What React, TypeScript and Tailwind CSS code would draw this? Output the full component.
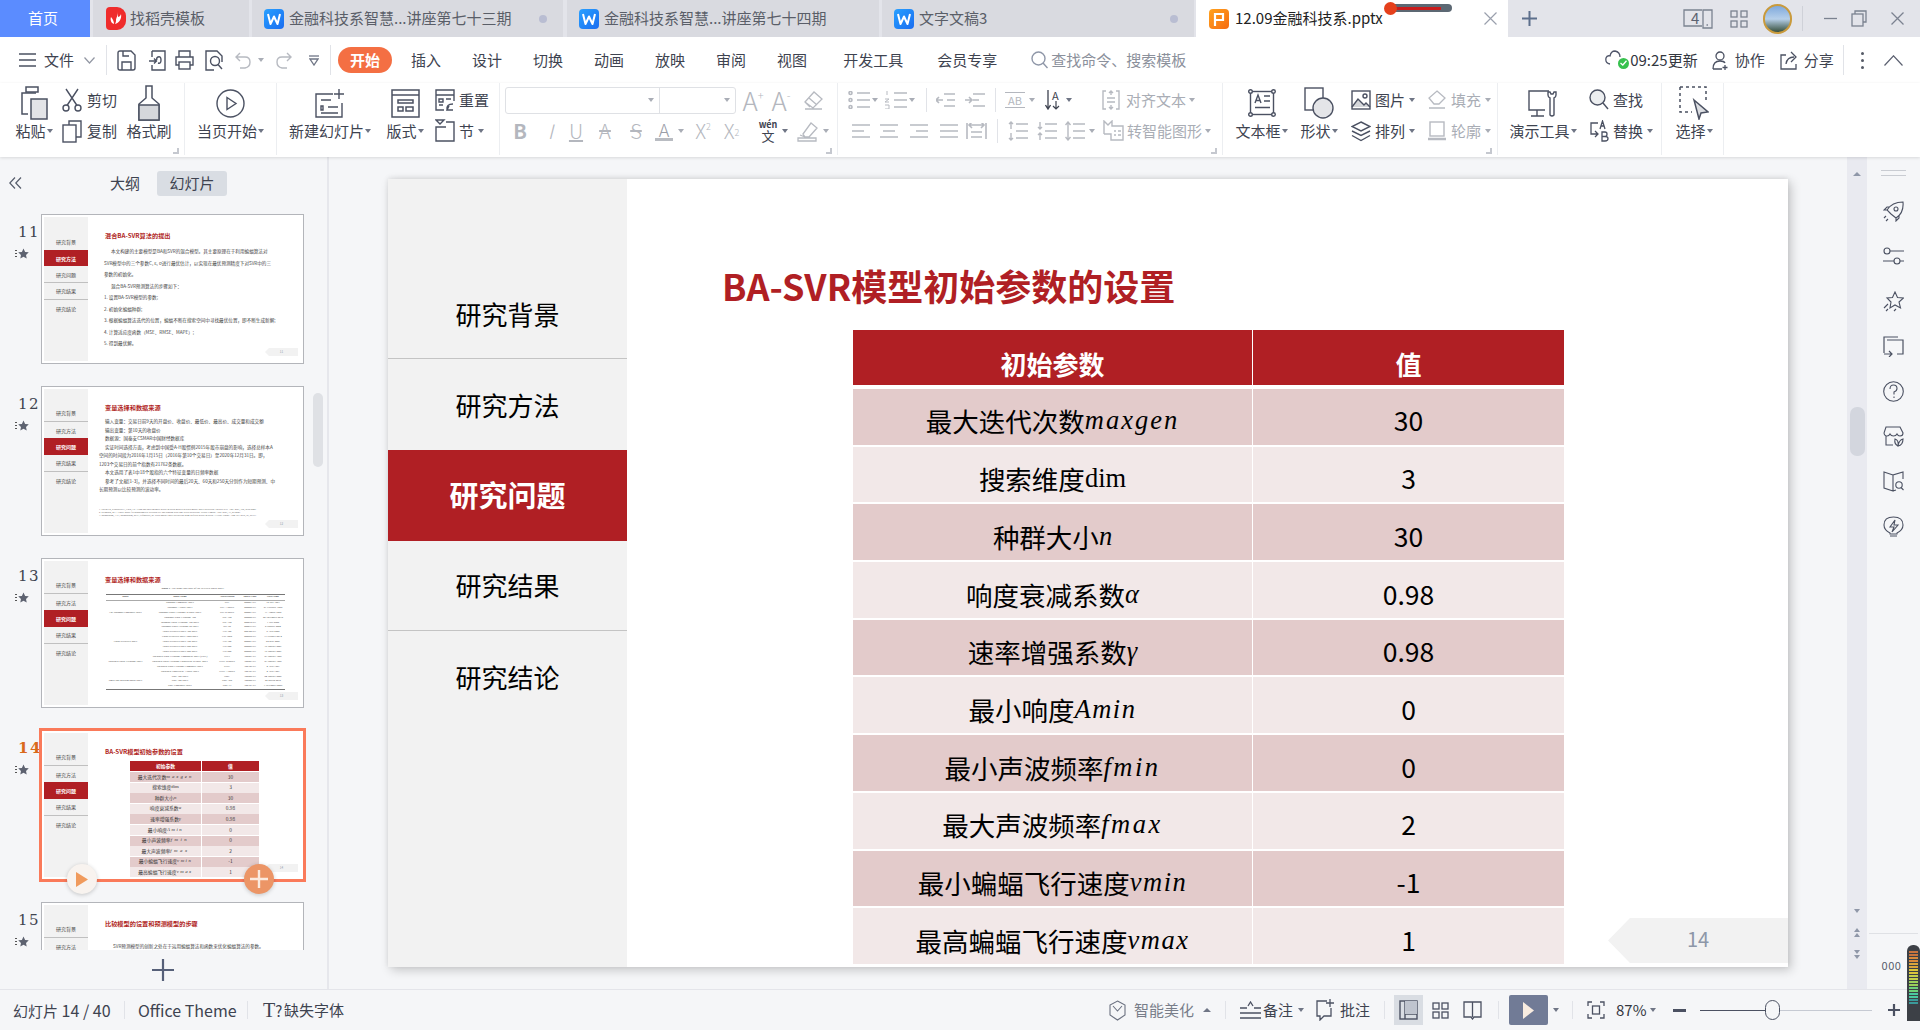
import React from "react";

const C = "#4b5162";
const D = "#b7bac1";

type SP = { w: number; h: number; children: React.ReactNode; c?: string; className?: string; sw?: number };
function S({ w, h, children, c = C, className = "", sw = 1.5 }: SP) {
  return (
    <svg width={w} height={h} viewBox={`0 0 ${w} ${h}`} fill="none" stroke={c} strokeWidth={sw} className={`shrink-0 ${className}`}>
      {children}
    </svg>
  );
}
function Caret({ className = "", gray = false }: { className?: string; gray?: boolean }) {
  return <span className={`inline-block shrink-0 w-0 h-0 border-x-[3.5px] border-t-[4px] border-x-transparent ${gray ? "border-t-[#a9adb6]" : "border-t-[#6f7585]"} ${className}`} />;
}
function Sep({ className = "" }: { className?: string }) {
  return <span className={`block shrink-0 w-px bg-[#e1e3e8] ${className}`} />;
}
function Corner() {
  return <span className="absolute right-[5px] bottom-[1px] w-[6px] h-[6px] border-r-2 border-b-2 border-[#c5c8cf]" />;
}

function WLogo() {
  return (
    <span className="shrink-0 w-[20px] h-[20px] rounded-[4px] bg-gradient-to-br from-[#2aa0ff] to-[#1c6cf0] flex items-center justify-center">
      <svg width="14" height="12" viewBox="0 0 14 12" fill="none" stroke="#fff" strokeWidth="2" strokeLinejoin="round"><path d="M1 1 L3.5 11 L7 3.5 L10.5 11 L13 1" /></svg>
    </span>
  );
}
function Dot() {
  return <span className="block w-[8px] h-[8px] rounded-full bg-[#b9bdd2]" />;
}

function TabBar() {
  return (
    <div className="relative flex h-[37px] bg-[#e3e4ea] text-[15px] text-[#5a5e68]">
      <div className="w-[90px] bg-[#5b8cff] text-white flex items-center pl-[28px]">首页</div>
      <div className="w-[156px] ml-[3px] bg-[#d9dae0] flex items-center pl-[13px]">
        <span className="w-[20px] h-[23px] rounded-l-[4px] rounded-r-[9px] bg-[#ef2c2c] flex items-center justify-center shrink-0">
          <svg width="12" height="15" viewBox="0 0 12 15" fill="#fff"><path d="M7 0 C9 4 6 6 6 9 C6 10 6 11 5 13 C9 12 12 8 11 3 C10 6 8 6 8 6 C8 4 8 2 7 0Z M1 6 C0 9 1 12 4 13 C4 11 3 8 1 6Z" /></svg>
        </span>
        <span className="ml-[4px]">找稻壳模板</span>
      </div>
      <div className="w-[311px] ml-[3px] bg-[#d9dae0] flex items-center pl-[12px]">
        <WLogo />
        <span className="ml-[5px] w-[250px] whitespace-nowrap">金融科技系智慧...讲座第七十三期</span>
        <Dot />
      </div>
      <div className="w-[312px] ml-[4px] bg-[#d9dae0] flex items-center pl-[12px]">
        <WLogo />
        <span className="ml-[5px] whitespace-nowrap">金融科技系智慧...讲座第七十四期</span>
      </div>
      <div className="w-[312px] ml-[3px] bg-[#d9dae0] flex items-center pl-[12px]">
        <WLogo />
        <span className="ml-[5px] w-[251px]">文字文稿3</span>
        <Dot />
      </div>
      <div className="w-[312px] ml-[2px] bg-white flex items-center pl-[13px] text-[#222]">
        <span className="shrink-0 w-[20px] h-[20px] rounded-[4px] bg-gradient-to-br from-[#ffa21f] to-[#f56a10] flex items-center justify-center">
          <svg width="12" height="14" viewBox="0 0 12 14" fill="none" stroke="#fff" strokeWidth="2.2"><path d="M2 14 V2 H10 V8 H2" /></svg>
        </span>
        <span className="ml-[6px] w-[249px] whitespace-nowrap">12.09金融科技系.pptx</span>
        <S w={13} h={13} c="#9aa0ad" sw={1.2}><path d="M0.5 0.5 L12.5 12.5 M12.5 0.5 L0.5 12.5" /></S>
      </div>
      <S w={15} h={15} c="#5d6f8c" sw={2} className="ml-[14px] self-center"><path d="M7.5 0 V15 M0 7.5 H15" /></S>
      <S w={30} h={20} c="#7b8290" sw={1.3} className="ml-[146px] self-center">
        <path d="M19 1 H1 V17 H19 M20 1 H29 V19 H20Z" />
        <path d="M23.5 16 H25" />
      </S>
      <span className="w-0 -ml-[22px] self-center text-[15px] text-[#5b6270]">4</span>
      <S w={18} h={18} c="#7b8290" sw={1.3} className="ml-[39px] self-center">
        <rect x="1" y="1" width="6" height="6" /><rect x="11" y="1" width="6" height="6" /><rect x="1" y="11" width="6" height="6" /><rect x="11" y="11" width="6" height="6" />
      </S>
      <span className="ml-[15px] self-center w-[29px] h-[30px] rounded-full border-2 border-[#c99a3c] bg-gradient-to-b from-[#7fa9dc] via-[#b7d0ea] to-[#39513f]" />
      <span className="ml-[10px] self-center w-px h-[25px] bg-[#cfd1d8]" />
      <S w={13} h={13} c="#7b8290" sw={1.3} className="ml-[21px] self-center"><path d="M0 6.5 H13" /></S>
      <S w={16} h={17} c="#7b8290" sw={1.3} className="ml-[14px] self-center"><path d="M4 4 V1 H15 V12 H12" /><rect x="1" y="4" width="11" height="12" /></S>
      <S w={13} h={13} c="#7b8290" sw={1.3} className="ml-[24px] self-center"><path d="M0.5 0.5 L12.5 12.5 M12.5 0.5 L0.5 12.5" /></S>
      <div className="absolute left-[1384px] top-[1px] w-[68px] h-[14px] flex items-center">
        <span className="w-[13px] h-[13px] rounded-full bg-[#e5401c] shrink-0 z-10" />
        <span className="-ml-[4px] w-[59px] h-[8px] rounded-r-full bg-[#5c6873] flex items-center">
          <span className="block ml-[2px] w-[46px] h-[3px] bg-[#c91d1d]" />
        </span>
      </div>
    </div>
  );
}

function MenuItem({ t, ml = "ml-[31px]" }: { t: string; ml?: string }) {
  return <span className={`${ml} whitespace-nowrap`}>{t}</span>;
}

function MenuRow() {
  return (
    <div className="flex items-center h-[46px] bg-white text-[15px] text-[#3e4350] whitespace-nowrap">
      <S w={17} h={14} sw={1.3} className="ml-[19px]"><path d="M0 1 H17 M0 7 H17 M0 13 H17" /></S>
      <span className="ml-[8px]">文件</span>
      <S w={11} h={7} c="#9297a3" sw={1.2} className="ml-[10px]"><path d="M0.5 0.5 L5.5 6 L10.5 0.5" /></S>
      <Sep className="ml-[11px] h-[30px]" />
      <S w={19} h={21} sw={1.4} className="ml-[10px]"><path d="M1 3 Q1 1 3 1 H14 L18 5 V18 Q18 20 16 20 H3 Q1 20 1 18Z" /><path d="M5 20 V12 H14 V20 M6 1 V6 H12" /></S>
      <S w={17} h={21} sw={1.4} className="ml-[13px]"><path d="M3 1 H16 V20 H3 V15 M3 7 V1" /><path d="M0 11 H7 M5 8.5 L7.5 11 L5 13.5 M9 13 Q12 14 12 10 Q12 6 9 7 Q7 8 8 10" /></S>
      <S w={19} h={20} sw={1.4} className="ml-[9px]"><path d="M4 7 V1 H15 V7 M4 15 H1 V7 H18 V15 H15" /><rect x="4" y="12" width="11" height="7" /></S>
      <S w={18} h={21} sw={1.4} className="ml-[11px]"><path d="M9 20 H1 V1 H12 L17 6 V12" /><circle cx="10" cy="11" r="4.5" /><path d="M13 14.5 L17 19" /></S>
      <S w={16} h={17} c={D} sw={1.4} className="ml-[12px]"><path d="M5 1 L1 5 L5 9 M1 5 H10 Q15 5 15 10 Q15 15 10 16 H5" /></S>
      <Caret gray className="ml-[7px]" />
      <S w={17} h={17} c={D} sw={1.4} className="ml-[11px]"><path d="M12 1 L16 5 L12 9 M16 5 H7 Q2 5 2 10 Q2 15 7 16 H12" /></S>
      <S w={10} h={11} c="#6f7585" sw={1.3} className="ml-[17px]"><path d="M0 1 H10" /><path d="M1 4 H9 L5 10Z" fill="none" /></S>
      <Sep className="ml-[11px] h-[30px]" />
      <span className="ml-[7px] w-[54px] h-[26px] rounded-full bg-[#f46f43] text-white font-bold flex items-center justify-center">开始</span>
      <MenuItem t="插入" ml="ml-[19px]" />
      <MenuItem t="设计" />
      <MenuItem t="切换" />
      <MenuItem t="动画" />
      <MenuItem t="放映" />
      <MenuItem t="审阅" />
      <MenuItem t="视图" />
      <MenuItem t="开发工具" ml="ml-[36px]" />
      <MenuItem t="会员专享" ml="ml-[34px]" />
      <S w={17} h={18} c="#8f97a8" sw={1.4} className="ml-[34px]"><circle cx="7.5" cy="7.5" r="6.5" /><path d="M12 12 L16.5 17" /></S>
      <span className="ml-[3px] text-[#8b909b]">查找命令、搜索模板</span>
      <S w={22} h={20} c="#50566a" sw={1.3} className="ml-[419px]"><path d="M5 14 Q0 13 1 8 Q2 5 5 6 Q6 1 10 1 Q15 2 15 7" /></S>
      <span className="-ml-[9px] mt-[6px] w-[11px] h-[11px] rounded-full bg-[#37c14e] shrink-0 flex items-center justify-center">
        <svg width="7" height="6" viewBox="0 0 7 6" fill="none" stroke="#fff" strokeWidth="1.3"><path d="M0.5 3 L2.8 5 L6.5 0.8" /></svg>
      </span>
      <span className="ml-[1px] text-[#33373f]">09:25更新</span>
      <S w={18} h={19} sw={1.3} className="ml-[14px]"><circle cx="8" cy="5" r="4" /><path d="M1 18 Q1 10 8 10 Q12 10 13 12 M1 18 H10 M13 14 V19 M10.5 16.5 H15.5" /></S>
      <span className="ml-[5px]">协作</span>
      <S w={17} h={19} sw={1.3} className="ml-[15px]"><path d="M6 4 H1 V18 H16 V13 M6 13 Q7 6 14 6 M11 1 L16 6 L11 11" /></S>
      <span className="ml-[7px]">分享</span>
      <Sep className="ml-[9px] h-[30px]" />
      <span className="ml-[17px] flex flex-col gap-[4px]"><i className="block w-[3px] h-[3px] rounded-full bg-[#555a66]" /><i className="block w-[3px] h-[3px] rounded-full bg-[#555a66]" /><i className="block w-[3px] h-[3px] rounded-full bg-[#555a66]" /></span>
      <S w={19} h={11} c="#5b6070" sw={1.2} className="ml-[20px]"><path d="M0.5 10.5 L9.5 0.8 L18.5 10.5" /></S>
    </div>
  );
}

function Big({ w, icon, label, caret = true, className = "" }: { w: string; icon: React.ReactNode; label: string; caret?: boolean; className?: string }) {
  return (
    <div className={`${w} ${className} shrink-0 flex flex-col items-center h-[72px]`}>
      <div className="h-[40px] flex items-center justify-center">{icon}</div>
      <div className="h-[16px] flex items-center whitespace-nowrap">
        <span>{label}</span>
        {caret && <Caret className="ml-[1px]" />}
      </div>
    </div>
  );
}
function Small({ icon, label, caret, gray = false, gap = "ml-[4px]" }: { icon: React.ReactNode; label: string; caret?: boolean; gray?: boolean; gap?: string }) {
  return (
    <>
      {icon}
      <span className={`${gap} whitespace-nowrap ${gray ? "text-[#a9adb5]" : ""}`}>{label}</span>
      {caret && <Caret gray={gray} className="ml-[4px]" />}
    </>
  );
}
function Two({ a, b, className = "" }: { a: React.ReactNode; b: React.ReactNode; className?: string }) {
  return (
    <div className={`flex flex-col shrink-0 ${className}`}>
      <div className="h-[34px] flex items-center">{a}</div>
      <div className="h-[28px] flex items-center">{b}</div>
    </div>
  );
}
function Group({ w, children, corner }: { w: string; children: React.ReactNode; corner?: boolean }) {
  return (
    <div className={`${w} relative flex shrink-0 h-[72px] border-r border-[#eceef1]`}>
      {children}
      {corner && <Corner />}
    </div>
  );
}
function Lines({ w = 18, d, c = D, className = "" }: { w?: number; d: string; c?: string; className?: string }) {
  return <S w={w} h={16} c={c} sw={1.6} className={className}><path d={d} /></S>;
}
function Box({ w, children, c = "text-[#b4b7be]", extra = "" }: { w: string; children: React.ReactNode; c?: string; extra?: string }) {
  return <span className={`${w} ${c} ${extra} shrink-0 flex items-center justify-center leading-none`}>{children}</span>;
}

function Ribbon() {
  return (
    <div className="flex h-[74px] pb-[2px] bg-white text-[15px] text-[#3e4350] shadow-[0_1px_3px_rgba(0,0,0,0.12)] relative z-10">
      <Group w="w-[185px] pl-[13px]" corner>
        <Big w="w-[42px]" label="粘贴" icon={
          <S w={28} h={34} sw={1.5}><path d="M16 7 H2 V28 H8" /><rect x="6" y="1" width="12" height="5" /><rect x="11" y="13" width="16" height="20" fill="#e3e4e7" /></S>
        } />
        <Two className="ml-[7px]"
          a={<Small gap="ml-[5px]" label="剪切" icon={<S w={20} h={24} sw={1.4}><circle cx="4" cy="20" r="3" /><circle cx="16" cy="20" r="3" /><path d="M5 17.5 L16 1 M15 17.5 L4 1" /></S>} />}
          b={<Small gap="ml-[5px]" label="复制" icon={<S w={20} h={23} sw={1.4}><path d="M7 5 V1 H19 V17 H14" /><rect x="1" y="5" width="13" height="17" /></S>} />}
        />
        <Big w="w-[44px] ml-[10px]" caret={false} label="格式刷" icon={
          <S w={24} h={37} sw={1.5}><path d="M9 1 H15 V13 L22 19 V35 H2 V19 L9 13Z" /><path d="M2 20 H22 V35 H2Z" fill="#d5d7db" /></S>
        } />
      </Group>
      <Group w="w-[92px]">
        <Big w="w-full" label="当页开始" icon={<S w={29} h={29} sw={1.4}><circle cx="14.5" cy="14.5" r="13.5" /><path d="M11 8.5 L20 14.5 L11 20.5Z" /></S>} />
      </Group>
      <Group w="w-[223px] pl-[11px]">
        <Big w="w-[84px]" label="新建幻灯片" icon={
          <S w={30} h={29} sw={1.4}><path d="M18 5 H1 V28 H27 V14" /><path d="M24 0 V10 M19 5 H29 M6 11 H16 M6 17 H8 V21 H6Z M13 18 H23 M6 24 H23" /></S>
        } />
        <Big w="w-[40px] ml-[13px]" label="版式" icon={<S w={29} h={29} sw={1.5}><rect x="1" y="1" width="27" height="27" /><path d="M1 6 H28" /><rect x="7" y="11" width="15" height="3" /><rect x="7" y="18" width="5" height="4" /><rect x="15" y="18" width="7" height="4" /></S>} />
        <Two className="ml-[10px]"
          a={<Small label="重置" icon={<S w={20} h={23} sw={1.4}><path d="M19 12 V1 H1 V21 H9 M1 6 H19 M4 10 H8 V13 H4Z M11 10 H16 M4 16 H8" /><path d="M18 21 H12 L14 17 M12 21 Q11 15 18 15" /></S>} />}
          b={<Small label="节" caret icon={<S w={20} h={24} sw={1.4}><path d="M1 1 L9 1 L5 5Z M11 3 H19 V22 H1 V8 H11" /></S>} />}
        />
      </Group>
      <Group w="w-[338px]" corner>
        <Two
          a={
            <>
              <span className="ml-[5px] w-[231px] h-[27px] rounded-[3px] border border-[#dfe1e5] flex">
                <span className="w-[155px] border-r border-[#dfe1e5] flex items-center justify-end pr-[5px]"><Caret gray /></span>
                <span className="w-[76px] flex items-center justify-end pr-[5px]"><Caret gray /></span>
              </span>
              <Box w="w-[18px] ml-[8px]" extra="text-[26px] font-light">A<sup className="text-[11px]">+</sup></Box>
              <Box w="w-[18px] ml-[10px]" extra="text-[26px] font-light">A<sup className="text-[11px]">-</sup></Box>
              <S w={20} h={20} c={D} sw={1.3} className="ml-[13px]"><path d="M2 12 L11 2 L19 9 L10 18Z M6 8 L14 15 M2 12 L7 17 M2 19 H19" /></S>
            </>
          }
          b={
            <>
              <Box w="w-[14px] ml-[13px]" extra="text-[20px] font-bold">B</Box>
              <Box w="w-[11px] ml-[18px]" extra="text-[20px] italic font-light">I</Box>
              <Box w="w-[18px] ml-[11px]" extra="text-[20px] underline font-light">U</Box>
              <Box w="w-[18px] ml-[11px]" extra="text-[20px] line-through font-light">A</Box>
              <Box w="w-[16px] ml-[14px]" extra="text-[20px] line-through font-light">S</Box>
              <span className="ml-[11px] w-[18px] flex flex-col items-center shrink-0">
                <span className="text-[18px] leading-[17px] text-[#9a9ea8] font-light">A</span>
                <span className="block w-[18px] h-[3px] bg-[#b9bcc2]" />
              </span>
              <Caret gray className="ml-[5px]" />
              <Box w="w-[20px] ml-[9px]" extra="text-[20px] font-light">X<sup className="text-[9px]">2</sup></Box>
              <Box w="w-[21px] ml-[8px]" extra="text-[20px] font-light">X<sub className="text-[9px]">2</sub></Box>
              <span className="ml-[16px] w-[20px] flex flex-col items-center shrink-0 leading-none text-[#3e4350]">
                <span className="text-[9px] font-bold">wén</span>
                <span className="text-[13px]">文</span>
              </span>
              <Caret className="ml-[4px]" />
              <S w={22} h={21} c={D} sw={1.3} className="ml-[9px]"><path d="M6 13 L14 2 L20 7 L12 16 L8 16Z M3 14 L8 16 M1 17 H19 V20 H1Z" /></S>
              <Caret gray className="ml-[4px]" />
            </>
          }
        />
      </Group>
      <Group w="w-[385px]" corner>
        <Two
          a={
            <>
              <S w={22} h={18} c={D} sw={1.6} className="ml-[10px]"><path d="M9 2 H22 M9 9 H22 M9 16 H22" /><circle cx="2.5" cy="2" r="1.5" /><circle cx="2.5" cy="9" r="1.5" /><circle cx="2.5" cy="16" r="1.5" /></S>
              <Caret gray className="ml-[2px]" />
              <S w={22} h={18} c={D} sw={1.6} className="ml-[7px]"><path d="M9 2 H22 M9 9 H22 M9 16 H22" /><path d="M2 0 V4 M0 8 H4 L0 11 H4 M0 14 H4 V18 H0" strokeWidth="1" /></S>
              <Caret gray className="ml-[2px]" />
              <Sep className="ml-[11px] h-[24px]" />
              <Lines w={19} className="ml-[9px]" d="M8 2 H19 M11 8 H19 M8 14 H19 M0 8 H7 M3 5 L0 8 L3 11" />
              <Lines w={20} className="ml-[10px]" d="M8 2 H20 M8 8 H14 M8 14 H20 M0 8 H7 M4 5 L7 8 L4 11" />
              <Sep className="ml-[10px] h-[24px]" />
              <span className="ml-[9px] w-[20px] flex flex-col items-center shrink-0 border-y border-[#b4b7be] text-[11px] leading-[14px] text-[#b4b7be]">AB</span>
              <Caret gray className="ml-[4px]" />
              <span className="ml-[10px] w-[17px] flex items-center shrink-0">
                <S w={6} h={20} sw={1.3} c="#3e4350"><path d="M3 0 V19 M0.5 15 L3 19 L5.5 15" /></S>
                <span className="ml-px text-[11px] leading-none text-[#3e4350] flex flex-col"><span>A</span><S w={8} h={9} sw={1.2} c="#3e4350"><path d="M4 0 V8 M1 5 L4 8 L7 5" /></S></span>
              </span>
              <Caret className="ml-[4px]" />
              <S w={18} h={20} c={D} sw={1.4} className="ml-[30px]"><path d="M4 1 H1 V19 H4 M14 1 H17 V19 H14 M5 8 H13 M5 12 H13 M9 1 V5 M7 3 L9 1 L11 3 M9 19 V15 M7 17 L9 19 L11 17" /></S>
              <span className="ml-[6px] text-[#a9adb5] whitespace-nowrap">对齐文本</span>
              <Caret gray className="ml-[3px]" />
            </>
          }
          b={
            <>
              <Lines className="ml-[14px]" d="M0 2 H18 M0 8 H12 M0 14 H18" />
              <Lines className="ml-[10px]" d="M0 2 H18 M3 8 H15 M0 14 H18" />
              <Lines className="ml-[12px]" d="M0 2 H18 M6 8 H18 M0 14 H18" />
              <Lines className="ml-[12px]" d="M0 2 H18 M0 8 H18 M0 14 H18" />
              <Lines w={21} className="ml-[8px]" d="M1 0 V16 M20 0 V16 M3 2 H18 M6 5 L3 2 L6 -1 M15 -1 L18 2 L15 5 M5 9 H16 M5 14 H16" />
              <Sep className="ml-[10px] h-[24px]" />
              <S w={20} h={20} c={D} sw={1.4} className="ml-[10px]"><path d="M8 3 H20 M8 10 H20 M8 17 H20 M3 1 V8 M1 3 L3 1 L5 3 M3 12 V19 M1 17 L3 19 L5 17" /></S>
              <S w={20} h={20} c={D} sw={1.4} className="ml-[9px]"><path d="M8 3 H20 M8 10 H20 M8 17 H20 M3 1 V8 M1 6 L3 8 L5 6 M3 12 V19 M1 14 L3 12 L5 14" /></S>
              <S w={20} h={20} c={D} sw={1.4} className="ml-[8px]"><path d="M8 3 H20 M8 10 H20 M8 17 H20 M3 1 V19 M0.5 4 L3 1 L5.5 4 M0.5 16 L3 19 L5.5 16" /></S>
              <Caret gray className="ml-[4px]" />
              <S w={21} h={22} c={D} sw={1.4} className="ml-[8px]"><path d="M1 14 V1 L5 5 L9 1 L9 6 H20 V20 H8 V14 H1" /><path d="M11 11 H13 M15 11 H18 M11 15 H13 M15 15 H18" /></S>
              <span className="ml-[3px] text-[#a9adb5] whitespace-nowrap">转智能图形</span>
              <Caret gray className="ml-[3px]" />
            </>
          }
        />
      </Group>
      <Group w="w-[275px] pl-[11px]" corner>
        <Big w="w-[55px]" label="文本框" icon={
          <S w={28} h={30} sw={1.4}><rect x="2.5" y="3.5" width="23" height="23" /><circle cx="2.5" cy="3.5" r="1.8" fill="#fff" /><circle cx="25.5" cy="3.5" r="1.8" fill="#fff" /><circle cx="2.5" cy="26.5" r="1.8" fill="#fff" /><circle cx="25.5" cy="26.5" r="1.8" fill="#fff" /><path d="M7 15 L10 7 L13 15 M8 12.5 H12 M16 8 H22 M16 13 H22 M7 19.5 H22" /></S>
        } />
        <Big w="w-[40px] ml-[10px]" label="形状" icon={
          <S w={30} h={32} sw={1.4}><rect x="1" y="1" width="18" height="22" /><ellipse cx="19" cy="21" rx="10" ry="10" fill="#e4e5e8" /></S>
        } />
        <Two className="ml-[12px]"
          a={<Small caret label="图片" icon={<S w={20} h={20} sw={1.4}><rect x="1" y="1" width="18" height="18" /><path d="M1 17 L7 9 L13 15 L15 13 L19 17" fill="#d5d7db" /><circle cx="14" cy="6" r="2" /></S>} />}
          b={<Small caret label="排列" icon={<S w={20} h={21} sw={1.4}><path d="M10 1 L19 5.5 L10 10 L1 5.5Z M1 10 L10 14.5 L19 10 M1 14.5 L10 19.5 L19 14.5" /></S>} />}
        />
        <Two className="ml-[13px]"
          a={<Small caret gray gap="ml-[5px]" label="填充" icon={<S w={18} h={20} c={D} sw={1.3}><path d="M9 1 L17 8 L11 14 H6 L1 8Z M1 18 H17" /></S>} />}
          b={<Small caret gray gap="ml-[5px]" label="轮廓" icon={<S w={18} h={20} c={D} sw={1.4}><rect x="2" y="1" width="14" height="14" /><path d="M0 18 H18" strokeWidth="2.5" /></S>} />}
        />
      </Group>
      <Group w="w-[164px] pl-[11px]">
        <Big w="w-[68px]" label="演示工具" icon={
          <S w={30} h={30} sw={1.4}><path d="M21 3 H1 V22 H17 M9 22 V28 M3 28 H16" /><path d="M22 14 V10 Q20 9 20 7 L20 4 L22 4 L23 6 L25 6 L26 4 L28 4 V7 Q28 9 26 10 V14 M22 14 V27 Q24 29 26 27 V14" /></S>
        } />
        <Two className="ml-[12px]"
          a={<Small label="查找" icon={<S w={20} h={22} sw={1.4}><circle cx="8.5" cy="8.5" r="7.5" fill="#eceef0" /><path d="M14 14 L19 20" /></S>} />}
          b={<Small caret label="替换" icon={<S w={20} h={22} sw={1.3}><path d="M9 3 H2 V14 H9 M6 11 L9 14 L6 17" /><path d="M11 9 L13.5 1 L16 9 M12 6 H15 M13 12 V21 H16 Q19 21 19 18.5 Q19 16.5 16 16.5 H13 M13 16.5 V12 H16 Q18 12 18 14 Q18 16.5 16 16.5" /></S>} />}
        />
      </Group>
      <Group w="w-[62px] pl-[11px]">
        <Big w="w-[42px]" label="选择" icon={
          <S w={30} h={34} sw={1.5}><path d="M1 1 H27 V16 M1 1 V26 H13" strokeDasharray="3 3" /><path d="M15 14 L29 26 L22 27 L20 33 Z" fill="#dcdee2" /></S>
        } />
      </Group>
    </div>
  );
}

const NAV = ["研究背景", "研究方法", "研究问题", "研究结果", "研究结论"];
const NAV_CLS = [
  "h-[91px] text-black text-[26px] border-b border-[#c4c4c4]",
  "h-[91px] text-black text-[26px]",
  "h-[91px] pb-[2px] bg-[#b01f24] text-white font-bold text-[29px]",
  "h-[90px] pb-[3px] text-black text-[26px] border-b border-[#c4c4c4]",
  "h-[90px] text-black text-[26px]",
];

type Row = { name: string; v: React.ReactNode; val: string };
const ROWS: Row[] = [
  { name: "最大迭代次数", v: <i className="tracking-[2px]">maxgen</i>, val: "30" },
  { name: "搜索维度", v: <span>dim</span>, val: "3" },
  { name: "种群大小", v: <i>n</i>, val: "30" },
  { name: "响度衰减系数", v: <i>α</i>, val: "0.98" },
  { name: "速率增强系数", v: <i>γ</i>, val: "0.98" },
  { name: "最小响度", v: <i className="tracking-[1.5px]">Amin</i>, val: "0" },
  { name: "最小声波频率", v: <i className="tracking-[2.5px]">fmin</i>, val: "0" },
  { name: "最大声波频率", v: <i className="tracking-[2.5px]">fmax</i>, val: "2" },
  { name: "最小蝙蝠飞行速度", v: <i className="tracking-[1.5px]">vmin</i>, val: "-1" },
  { name: "最高蝙蝠飞行速度", v: <i className="tracking-[1.5px]">vmax</i>, val: "1" },
];

function MainSlide() {
  return (
    <div className="w-[1400px] h-[788px] bg-white flex shadow-[3px_3px_10px_rgba(0,0,0,0.2),0_-1px_5px_rgba(0,0,0,0.08)] overflow-hidden">
      <div className="w-[239px] shrink-0 bg-[#f2f2f2] pt-[89px] flex flex-col">
        {NAV.map((n, i) => (
          <div key={n} className={`shrink-0 flex items-center justify-center ${NAV_CLS[i]}`}>
            {n}
          </div>
        ))}
      </div>
      <div className="flex-1 flex flex-col">
        <div className="ml-[95px] mt-[81px] h-[50px] flex items-center whitespace-nowrap text-[36px] font-bold text-[#b01f24] leading-none">BA-SVR模型初始参数的设置</div>
        <div className="flex mt-[20px]">
          <div className="ml-[226px] w-[711px] shrink-0 h-[637px]">
            <div className="flex h-[55px] mb-[4px] bg-[#b01f24] text-white font-bold text-[26px]">
              <div className="w-[400px] border-r border-white flex items-center justify-center pt-[12px]">初始参数</div>
              <div className="flex-1 flex items-center justify-center pt-[12px]">值</div>
            </div>
            {ROWS.map((r, i) => (
              <div key={r.name} className={`flex h-[55.7px] mb-[2px] text-[26.5px] text-black ${i % 2 === 0 ? "bg-[#e3cbcb]" : "bg-[#f2e8e8]"}`}>
                <div className="w-[400px] border-r border-white flex items-center justify-center pt-[9px] whitespace-nowrap">
                  <span>{r.name}</span>
                  <span className="font-['Liberation_Serif',serif]">{r.v}</span>
                </div>
                <div className="flex-1 flex items-center justify-center pt-[7px]">{r.val}</div>
              </div>
            ))}
          </div>
          <div className="ml-[44px] mt-[588px] pb-[4px] w-[180px] h-[45px] shrink-0 bg-[#f2f2f2] [clip-path:polygon(22px_0,100%_0,100%_100%,22px_100%,0_50%)] flex items-center justify-center text-[20px] text-[#8d97a8]">14</div>
        </div>
      </div>
    </div>
  );
}

function ThumbFrame({ active, children, rowSeps = true }: { active: number; children: React.ReactNode; rowSeps?: boolean }) {
  return (
    <div className="w-[263px] h-[150px] border border-[#b3b5ba] bg-white p-[2px] flex overflow-hidden">
      <div className="w-[44px] shrink-0 bg-[#f2f2f2] pt-[16px] flex flex-col text-[5px] leading-none text-[#444]">
        {NAV.map((n, i) => (
          <div
            key={n}
            className={`h-[16.7px] shrink-0 flex items-center justify-center ${i === active ? "bg-[#b01f24] text-white font-bold" : ""} ${(rowSeps && i === 0) || i === 3 || (!rowSeps && i === 2) ? "border-b border-[#c0c0c0]" : ""}`}
          >
            {n}
          </div>
        ))}
      </div>
      <div className="flex-1 flex flex-col relative text-[4.3px] leading-[8.4px] text-[#444] min-w-0">{children}</div>
    </div>
  );
}
function ThumbTitle({ t }: { t: string }) {
  return <div className="ml-[17px] mt-[15px] text-[6.2px] leading-[8px] font-bold text-[#b01f24] whitespace-nowrap">{t}</div>;
}
function PageTag({ n }: { n: number }) {
  return <div className="absolute right-[3px] bottom-[5px] w-[33px] h-[8px] bg-[#f2f2f2] [clip-path:polygon(4px_0,100%_0,100%_100%,4px_100%,0_50%)] flex items-center justify-center text-[3px] leading-none text-[#8d97a8]">{n}</div>;
}

const T13 = [
  ["", "Shanghai Composite Index", "SSE", "000001.SH", "19 July 1991"],
  ["", "Shanghai A Share Index", "SSE A shares", "000002.SH", "21 February 1992"],
  ["The Shanghai Composite Index", "Shanghai Stock Exchange B Share Index", "SSE B shares", "000003.SH", "17 August 1992"],
  ["", "Shanghai Stock Exchange 380", "SSE 380", "000009.SH", "29 November 2010"],
  ["", "Shanghai Stock Exchange 180 Index", "SSE 180", "000010.SH", "1 July 2002"],
  ["", "Shanghai Stock Exchange 50 Index", "SSE 50", "000016.SH", "2 January 2004"],
  ["", "China Securities Index 300 Index", "CSI 300", "000300.SH", "8 April 2005"],
  ["", "China Securities Index 1000 Index", "CSI 1000", "000852.SH", "17 October 2014"],
  ["China Securities Index", "China Securities Index 100 Index", "CSI 100", "000903.SH", "29 May 2006"],
  ["", "China Securities Index 500 Index", "CSI 500", "000905.SH", "15 January 2007"],
  ["", "China Securities Index 800 Index", "CSI 800", "000906.SH", "15 January 2007"],
  ["", "Shenzhen Stock Exchange Component Index (Price)", "SZCI", "399001.SZ", "23 January 1995"],
  ["Shenzhen Stock Exchange Index", "Shenzhen Stock Exchange Constituent B Share Index", "SZSE B shares", "399003.SZ", "23 January 1995"],
  ["", "Shenzhen Stock Exchange Composite Index", "SZSE", "399106.SZ", "4 April 1991"],
  ["", "Shenzhen Constituent A Share Index", "SZSE A shares", "399107.SZ", "4 April 1991"],
  ["", "SME 100 Index", "SME", "399005.SZ", "24 January 2006"],
  ["Small and Medium Board Index", "SME 300 Index", "SME 300", "399008.SZ", "22 March 2010"],
  ["", "SME Composite Index", "SME CI", "399101.SZ", "1 December 2005"],
];

function Thumb({ n }: { n: number }) {
  if (n === 11)
    return (
      <ThumbFrame active={1} rowSeps={false}>
        <ThumbTitle t="混合BA-SVR算法的提出" />
        <div className="ml-[16px] mt-[6px] w-[190px] text-[4.6px] leading-[11.5px]">
          <p className="indent-[7px] whitespace-nowrap">本文构建的主要模型是BA和SVR的混合模型。其主要原理在于利用蝙蝠算法对</p>
          <p className="whitespace-nowrap">SVR模型中的三个参数C, ε, σ进行最优估计，以实现在最优预测精度下对SVR中的三</p>
          <p>参数的初始化。</p>
          <p className="indent-[7px]">混合BA-SVR预测算法的步骤如下：</p>
          <p>1. 设置BA-SVR模型的参数;</p>
          <p>2. 初始化蝙蝠种群;</p>
          <p className="whitespace-nowrap">3. 根据蝙蝠算法迭代的位置，蝙蝠不断在搜索空间中寻找最优位置，即不断生成新解;</p>
          <p>4. 计算适应度函数（MSE、RMSE、MAPE）;</p>
          <p>5. 得到最优解。</p>
        </div>
        <PageTag n={11} />
      </ThumbFrame>
    );
  if (n === 12)
    return (
      <ThumbFrame active={2}>
        <ThumbTitle t="变量选择和数据来源" />
        <div className="ml-[11px] mt-[5px] w-[195px] text-[4.6px] leading-[8.5px] whitespace-nowrap">
          <p className="indent-[6px]">输入变量：交易日前9天的开盘价、收盘价、最低价、最高价、成交量和成交额</p>
          <p className="indent-[6px]">输出变量：第10天的收盘价</p>
          <p className="indent-[6px]">数据源：国泰安CSMAR中国财经数据库</p>
          <p className="indent-[6px]">实证时间选择方面，考虑到中国受A-H股惯例2015年股市崩盘的影响，选择总样本A</p>
          <p>空间的时间段为2016年1月15日（2016年第10个交易日）至2020年12月31日。即，</p>
          <p>1203个交易日的前个指数有21762条数据。</p>
          <p className="indent-[6px]">本文选用了表1中18个股指的六个特征变量的日频率数据</p>
          <p className="indent-[6px]">参考了文献[1-3]，并选择不同时间的最后20天、60天和250天分别作为短期预测、中</p>
          <p>长期预测以比较预测的波动率。</p>
        </div>
        <div className="ml-[11px] mt-[14px] text-[2.4px] leading-[3.4px] font-['Liberation_Serif',serif] whitespace-nowrap text-[#555]">
          <p>1. Huttner B, Kontopolis C, Chen, J.K. Long-and-short memory neural network models in stock market index prediction. Physica Sect. Appl. 2021, 162, 2168-2226.</p>
          <p>2. Kolmakin, M.A. Lasso: sparse for nonparametric decision tree and random walk time series prediction. Neural Comput. Appl. 2021, 33, 29-4847.</p>
          <p>3. Moghaddam, A.H.; Moghaddam, M.H.; Esfandyari, M. Stock market index prediction using artificial neural network. J. Econ. Financ. Adm. Sci. 2016, 21, 89-93.</p>
        </div>
        <PageTag n={12} />
      </ThumbFrame>
    );
  if (n === 13)
    return (
      <ThumbFrame active={2}>
        <ThumbTitle t="变量选择和数据来源" />
        <div className="mt-[3px] text-center text-[2.8px] leading-[4px] font-['Liberation_Serif',serif] text-[#444] w-[200px] ml-[5px]"><b>Table 1.</b> The name and code of the selected stock index.</div>
        <div className="ml-[18px] mt-[3px] w-[179px] border-y border-[#777] text-[2.6px] leading-[4.9px] font-['Liberation_Serif',serif] text-[#444]">
          <div className="flex border-b border-[#aaa] font-bold text-center">
            <span className="w-[39px]">Index</span><span className="w-[70px]">Index Name</span><span className="w-[24px]">Abbreviation</span><span className="w-[22px]">Index Code</span><span className="w-[24px]">Start Time</span>
          </div>
          {T13.map((r) => (
            <div key={r[1]} className="flex text-center whitespace-nowrap">
              <span className="w-[39px]">{r[0]}</span><span className="w-[70px]">{r[1]}</span><span className="w-[24px]">{r[2]}</span><span className="w-[22px]">{r[3]}</span><span className="w-[24px]">{r[4]}</span>
            </div>
          ))}
        </div>
        <PageTag n={13} />
      </ThumbFrame>
    );
  if (n === 14)
    return (
      <ThumbFrame active={2}>
        <ThumbTitle t="BA-SVR模型初始参数的设置" />
        <div className="ml-[42px] mt-[5px] w-[129px] text-[4.8px] leading-none text-[#333]">
          <div className="flex h-[10px] mb-[1px] bg-[#b01f24] text-white font-bold">
            <span className="w-[72px] border-r border-white flex items-center justify-center">初始参数</span>
            <span className="flex-1 flex items-center justify-center">值</span>
          </div>
          {ROWS.map((r, i) => (
            <div key={r.name} className={`flex h-[10.1px] mb-[0.5px] ${i % 2 === 0 ? "bg-[#e3cbcb]" : "bg-[#f2e8e8]"}`}>
              <span className="w-[72px] border-r border-white flex items-center justify-center whitespace-nowrap"><span>{r.name}</span><span className="font-['Liberation_Serif',serif]">{r.v}</span></span>
              <span className="flex-1 flex items-center justify-center">{r.val}</span>
            </div>
          ))}
        </div>
        <PageTag n={14} />
      </ThumbFrame>
    );
  return (
    <ThumbFrame active={-1}>
      <ThumbTitle t="比较模型的设置和预测模型的步骤" />
      <div className="ml-[25px] mt-[14px] text-[4.6px] whitespace-nowrap">SVR预测模型的创新之处在于运用蝙蝠算法和函数来优化蝙蝠算法的参数。</div>
    </ThumbFrame>
  );
}

function SlideItem({ n }: { n: number }) {
  const cur = n === 14;
  return (
    <div className="flex h-[172px] shrink-0 relative">
      <div className="w-[41px] shrink-0 flex flex-col items-start pl-[18px] pt-[9px]">
        <span className={`font-['DejaVu_Serif',serif] text-[15px] leading-[18px] tracking-[1.5px] ${cur ? "text-[#d9691c] font-bold" : "text-[#40444f]"}`}>{n}</span>
        <span className="mt-[7px] flex items-center -ml-[3px]">
          <span className="flex flex-col gap-[2px] mr-[1px]"><i className="block w-[2px] h-px bg-[#555]" /><i className="block w-[2px] h-px bg-[#555]" /><i className="block w-[2px] h-px bg-[#555]" /></span>
          <svg width="11" height="11" viewBox="0 0 24 24" fill="#5d6270"><path d="M12 1 L15.5 8.5 L23.5 9.5 L17.5 15 L19 23 L12 19 L5 23 L6.5 15 L0.5 9.5 L8.5 8.5Z" /></svg>
        </span>
      </div>
      <div className={cur ? "outline outline-[3px] -outline-offset-1 outline-[#fa7a5a] h-[150px] relative" : "h-[150px]"}>
        <Thumb n={n} />
      </div>
      {cur && (
        <>
          <span className="absolute left-[67px] top-[134px] w-[30px] h-[30px] rounded-full bg-[#f8f3ef] shadow-[0_1px_4px_rgba(0,0,0,0.2)] flex items-center justify-center">
            <svg width="12" height="15" viewBox="0 0 12 15" fill="#f09a5c"><path d="M0 0 L12 7.5 L0 15Z" /></svg>
          </span>
          <span className="absolute left-[244px] top-[134px] w-[30px] h-[30px] rounded-full bg-[#ec9566] shadow-[0_1px_4px_rgba(0,0,0,0.2)] flex items-center justify-center">
            <svg width="18" height="18" viewBox="0 0 18 18" stroke="#fbeadf" strokeWidth="2.4"><path d="M9 0 V18 M0 9 H18" /></svg>
          </span>
        </>
      )}
    </div>
  );
}

function LeftPanel() {
  return (
    <div className="w-[329px] shrink-0 border-r-2 border-[#e6e7ec] flex flex-col bg-[#f5f6f8] text-[15px] text-[#3e4350] relative">
      <div className="h-[57px] shrink-0 flex items-center pb-[5px] relative">
        <S w={13} h={12} c="#555c6b" sw={1.2} className="ml-[9px]"><path d="M6 0.5 L0.8 6 L6 11.5 M12 0.5 L6.8 6 L12 11.5" /></S>
        <span className="ml-[88px]">大纲</span>
        <span className="ml-[17px] w-[70px] h-[25px] rounded-[3px] bg-[#d9dde3] flex items-center justify-center">幻灯片</span>
      </div>
      <div className="h-[736px] overflow-hidden flex flex-col shrink-0">
        {[11, 12, 13, 14, 15].map((n) => (
          <SlideItem key={n} n={n} />
        ))}
      </div>
      <div className="flex-1 flex items-center justify-center pr-[2px]">
        <S w={22} h={22} c="#566079" sw={2.2}><path d="M11 0 V22 M0 11 H22" /></S>
      </div>
      <span className="absolute left-[313px] top-[236px] w-[10px] h-[74px] rounded-[5px] bg-[#dfe1e5]" />
    </div>
  );
}

function RightRail() {
  return (
    <div className="flex-1 flex flex-col items-center relative">
      <div className="mt-[13px] w-[25px] h-[6px] border-y border-[#c9ccd2]" />
      <div className="mt-[25px] flex flex-col items-center gap-[24px]">
        <S w={21} h={21} sw={1.1}><path d="M8 13 L4 9 Q9 1 20 1 Q21 12 13 17Z M5 9 H1 L4 6 H7 M13 17 V20 L16 17 V14" /><circle cx="13" cy="8" r="2" /><path d="M3 15 L1 17 M5 18 L3 20" /></S>
        <S w={21} h={21} sw={1.1}><circle cx="4" cy="5" r="3" /><path d="M7 5 H21 M0 15 H11 M17 15 H21" /><circle cx="14" cy="15" r="3" /></S>
        <S w={21} h={21} sw={1.1}><path d="M12 1 L14.5 6.5 L20.5 7 L16 11 L17.5 17 L12 14 L7 17 L8 11 L4 7 L9.5 6.5Z M1 17 L5 13 M3 20 L5 18 M11 20 L13 18" /></S>
        <S w={21} h={21} sw={1.2}><path d="M1 17 V1 H15 M4 4 H20 V18 H14 M1 18 H9 M6 15 L9 18 L6 21" /></S>
        <S w={21} h={21} sw={1.1}><circle cx="10.5" cy="10.5" r="9.8" /><path d="M7 8 Q7 4 10.5 4 Q14 4 14 7.5 Q14 10 11 11 V13.5 M11 15.5 V17" /></S>
        <S w={21} h={21} sw={1.1}><path d="M1 7 L3 1 H17 L20 7 Q20 10 17 10 Q15 10 14 8 Q13 10 10.5 10 Q8 10 7 8 Q6 10 4 10 L3 10 V19 H10 M1 7 Q1 9 3 10" /><path d="M15 20 Q11 18 12 13 Q16 14 15 20 Q20 19 20 13 Q16 14 15 20Z" /></S>
        <S w={21} h={21} sw={1.1}><path d="M10 4 L1 1 V17 L10 20 V4 L20 1 V8 M10 20 L13 19" /><circle cx="16" cy="14" r="3.2" /><path d="M18 16.5 L20.5 19" /></S>
        <S w={21} h={21} sw={1.1}><path d="M7 20 H14 M7 17 Q1 14 1 9 Q1 1 10.5 1 Q20 1 20 9 Q20 14 14 17 V18 H7Z M12 4 L7 11 H11 L9 16 L15 9 H11Z" /></S>
      </div>
      <div className="mt-auto mb-[18px] w-full flex flex-col items-center">
        <div className="w-[49px] h-px bg-[#dfe1e5]" />
        <span className="mt-[26px] mr-[4px] text-[11px] leading-none tracking-[0.5px] text-[#555c6b]">000</span>
      </div>
      <div className="absolute left-[40px] top-[788px] w-[13px] h-[76px] rounded-t-[6px] bg-[#3c4046] flex flex-col gap-px pt-[6px] px-[2px] overflow-hidden">
        {["bg-[#c9743e]","bg-[#c9743e]","bg-[#d98a3c]","bg-[#d98a3c]","bg-[#d9a53c]","bg-[#d9a53c]","bg-[#d9c63c]","bg-[#d9c63c]","bg-[#c3d04a]","bg-[#c3d04a]","bg-[#9ad05a]","bg-[#9ad05a]","bg-[#6ed07a]","bg-[#6ed07a]","bg-[#4ac9a0]","bg-[#4ac9a0]","bg-[#3b9a9a]","bg-[#3b9a9a]"].map((c, i) => (
          <span key={i} className={`block h-[2px] shrink-0 ${c}`} />
        ))}
      </div>
    </div>
  );
}

function Scrollbar() {
  return (
    <div className="w-[20px] shrink-0 bg-[#e9eaf0] flex flex-col items-center relative">
      <span className="mt-[15px] w-0 h-0 border-x-[4px] border-b-[4px] border-x-transparent border-b-[#8f97a8]" />
      <span className="mt-[231px] w-[15px] h-[49px] rounded-[7px] bg-[#d3d6de]" />
      <span className="mt-[453px] w-0 h-0 border-x-[3px] border-t-[4px] border-x-transparent border-t-[#8f97a8]" />
      <span className="mt-[15px] flex flex-col gap-px items-center">
        <span className="w-0 h-0 border-x-[3px] border-b-[4px] border-x-transparent border-b-[#8f97a8]" />
        <span className="w-0 h-0 border-x-[3px] border-b-[4px] border-x-transparent border-b-[#8f97a8]" />
      </span>
      <span className="mt-[13px] flex flex-col gap-px items-center">
        <span className="w-0 h-0 border-x-[3px] border-t-[4px] border-x-transparent border-t-[#8f97a8]" />
        <span className="w-0 h-0 border-x-[3px] border-t-[4px] border-x-transparent border-t-[#8f97a8]" />
      </span>
    </div>
  );
}

function StatusBar() {
  return (
    <div className="h-[41px] shrink-0 border-t border-[#e4e5ea] bg-[#f5f6f8] flex items-center text-[15px] text-[#3e4350] whitespace-nowrap">
      <span className="ml-[13px] w-[99px] shrink-0">幻灯片<span className="text-[16px]"> 14 / 40</span></span>
      <Sep className="ml-[12px] h-[18px]" />
      <span className="ml-[13px] w-[97px] shrink-0 text-[16px]">Office Theme</span>
      <Sep className="ml-[12px] h-[18px]" />
      <span className="ml-[15px] w-[21px] shrink-0 flex items-center">
        <span className="text-[20px] leading-none font-['Liberation_Serif',serif] font-light">T</span>
        <span className="text-[15px] leading-none">?</span>
      </span>
      <span className="w-[60px] shrink-0">缺失字体</span>
      <S w={17} h={21} sw={1.1} c="#6b7180" className="ml-[765px]"><path d="M8.5 1 L16 5 V15 L8.5 20 L1 15 V5Z M4 6 L8.5 11 L13 6" /></S>
      <span className="ml-[8px] w-[60px] shrink-0 text-[#787d89]">智能美化</span>
      <span className="ml-[9px] w-0 h-0 border-x-[4px] border-b-[4px] border-x-transparent border-b-[#6f7585]" />
      <Sep className="ml-[14px] h-[18px]" />
      <S w={21} h={18} sw={1.3} className="ml-[14px]"><path d="M0 7 H7 M14 7 H21 M0 12 H21 M0 17 H21 M8 5 L10.5 1 L13 5" /></S>
      <span className="ml-[2px] w-[30px] shrink-0">备注</span>
      <Caret className="ml-[5px]" />
      <S w={18} h={22} sw={1.3} className="ml-[12px]"><path d="M11 2 H1 V17 H4 V21 L8 17 H15 V9 M14 0 V8 M10 4 H18" /></S>
      <span className="ml-[6px] w-[30px] shrink-0">批注</span>
      <Sep className="ml-[14px] h-[18px]" />
      <span className="ml-[9px] w-[29px] h-[30px] shrink-0 bg-[#d9dde3] flex items-center justify-center">
        <S w={19} h={20} sw={1.4}><rect x="1" y="1" width="17" height="18" /><path d="M6 1 V19 M6 14 H18" /><rect x="6" y="1" width="12" height="13" fill="#bfc4ce" stroke="none" /></S>
      </span>
      <S w={17} h={17} sw={1.3} className="ml-[9px]"><rect x="1" y="1" width="6" height="6" /><rect x="10" y="1" width="6" height="6" /><rect x="1" y="10" width="6" height="6" /><rect x="10" y="10" width="6" height="6" /></S>
      <S w={19} h={19} sw={1.3} className="ml-[14px]"><path d="M1 1 H18 V16 H11 L9.5 18 L8 16 H1Z M9.5 1 V16" /></S>
      <Sep className="ml-[16px] h-[18px]" />
      <span className="ml-[10px] w-[39px] h-[30px] shrink-0 bg-[#717b96] rounded-[2px] flex items-center justify-center">
        <svg width="11" height="17" viewBox="0 0 11 17" fill="#f8ece0"><path d="M0 0 L11 8.5 L0 17Z" /></svg>
      </span>
      <Caret className="ml-[5px]" />
      <Sep className="ml-[13px] h-[18px]" />
      <S w={18} h={18} sw={1.3} className="ml-[14px]"><path d="M1 5 V1 H5 M13 1 H17 V5 M17 13 V17 H13 M5 17 H1 V13" /><rect x="5.5" y="5" width="7" height="8" /></S>
      <span className="ml-[11px] w-[30px] shrink-0 text-[#33373f]">87%</span>
      <Caret className="ml-[4px]" />
      <span className="ml-[17px] w-[13px] h-[3px] shrink-0 bg-[#4b5162]" />
      <span className="ml-[14px] w-[65px] h-px shrink-0 bg-[#4b5162]" />
      <span className="w-[15px] h-[20px] rounded-full border border-[#4b5162] bg-[#f5f6f8] shrink-0" />
      <span className="w-[92px] h-px shrink-0 bg-[#c6cad3]" />
      <S w={12} h={12} sw={2.2} className="ml-[16px]"><path d="M6 0 V12 M0 6 H12" /></S>
    </div>
  );
}

export default function App() {
  return (
    <div className="w-[1920px] h-[1030px] overflow-hidden flex flex-col bg-[#f5f6f8] font-['Noto_Sans_CJK_SC','Noto_Sans',sans-serif]">
      <TabBar />
      <MenuRow />
      <Ribbon />
      <div className="flex h-[832px] shrink-0">
        <LeftPanel />
        <div className="w-[1518px] shrink-0 pl-[59px] pt-[22px]">
          <MainSlide />
        </div>
        <Scrollbar />
        <RightRail />
      </div>
      <StatusBar />
    </div>
  );
}
